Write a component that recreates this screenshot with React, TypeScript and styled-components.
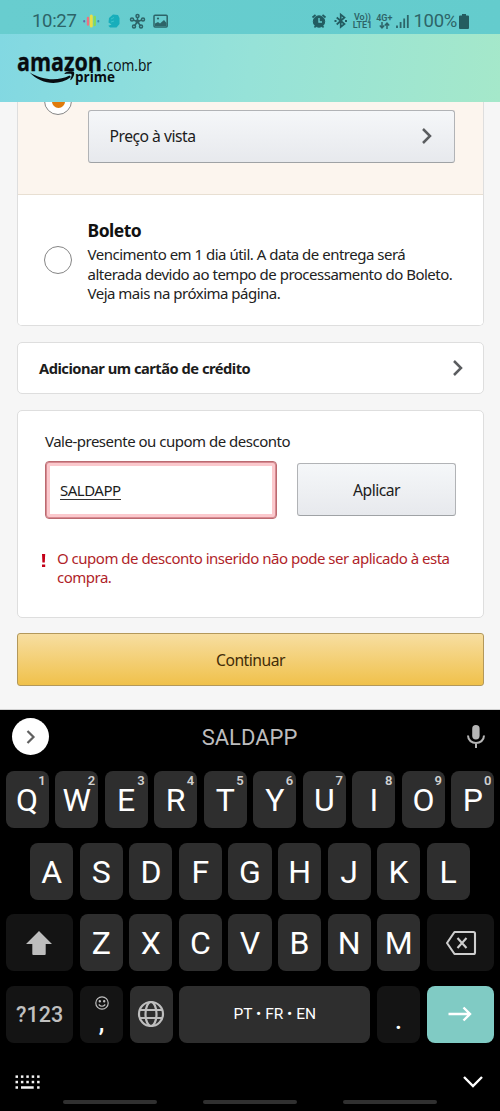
import React from "react";
import styled, { createGlobalStyle } from "styled-components";

const Global = createGlobalStyle`
  * { box-sizing: border-box; }
  body { margin: 0; background: #000; }
`;

const Screen = styled.div`
  width: 500px;
  height: 1111px;
  display: flex;
  flex-direction: column;
  overflow: hidden;
  font-family: "Noto Sans", "Open Sans", sans-serif;
  color: #1c1c1c;
`;

const StatusBar = styled.div`
  height: 34px;
  flex: none;
  display: flex;
  justify-content: space-between;
  padding: 8px 31px 0 32px;
  background: linear-gradient(90deg, #68cdcf, #64cccd);
  font-family: Roboto, sans-serif;
  color: #2d6468;
`;

const StatusGroup = styled.div<{ $gap: number }>`
  display: flex;
  align-items: center;
  gap: ${(p) => p.$gap}px;
  height: 26px;
`;

const StatusText = styled.span<{ $spacing: number }>`
  font-size: 18.5px;
  line-height: 26px;
  letter-spacing: ${(p) => p.$spacing}px;
`;

const Tiny = styled.span`
  display: flex;
  flex-direction: column;
  align-items: center;
  font-size: 9px;
  line-height: 8px;
  font-weight: 600;
`;

const Header = styled.header`
  height: 68px;
  flex: none;
  padding: 14px 0 0 12px;
  background: linear-gradient(97deg, #82d8e2 0%, #96e2d8 50%, #a5e8ca 100%);
`;

const Page = styled.main`
  height: 608px;
  flex: none;
  display: flex;
  flex-direction: column;
  padding: 0 16px 0 17px;
  background: #f6f6f6;
  border-bottom: 1px solid #d0d0d0;
  letter-spacing: -0.5px;
`;

const Card = styled.section<{ $height: number; $gap: number; $cut?: boolean }>`
  height: ${(p) => p.$height}px;
  margin-bottom: ${(p) => p.$gap}px;
  flex: none;
  overflow: hidden;
  background: #fff;
  border: 1px solid #dedede;
  border-top-width: ${(p) => (p.$cut ? 0 : 1)}px;
  border-radius: ${(p) => (p.$cut ? "0 0 5px 5px" : "5px")};
`;

const Option = styled.div<{ $selected?: boolean }>`
  display: flex;
  height: ${(p) => (p.$selected ? 93 : 130)}px;
  padding: ${(p) => (p.$selected ? "8px 28px 0 26px" : "25px 0 0 26px")};
  gap: 15.5px;
  background: ${(p) => (p.$selected ? "#fcf5ee" : "#fff")};
  border-bottom: ${(p) => (p.$selected ? "1px solid #e8dfd2" : "none")};
`;

const Radio = styled.span<{ $top: number }>`
  width: 28px;
  height: 28px;
  flex: none;
  display: flex;
  align-items: center;
  justify-content: center;
  margin-top: ${(p) => p.$top}px;
  border: 1px solid #858585;
  border-radius: 50%;
  background: #fff;
`;

const Dot = styled.span`
  width: 13px;
  height: 13px;
  border-radius: 50%;
  background: #e07b0c;
`;

const GreyButton = styled.button<{ $width: number; $split?: boolean }>`
  width: ${(p) => p.$width}px;
  height: 53px;
  flex: none;
  display: flex;
  align-items: center;
  justify-content: ${(p) => (p.$split ? "space-between" : "center")};
  padding: ${(p) => (p.$split ? "0 21px 1px 21px" : "0")};
  font: inherit;
  font-size: 15.7px;
  letter-spacing: inherit;
  color: #1c1c1c;
  background: linear-gradient(#f5f7f9, #e7e9ed);
  border: 1px solid #b1b3b6;
  border-bottom-color: #9fa2a5;
  border-radius: 3px;
`;

const Details = styled.div`
  white-space: nowrap;
`;

const OptionTitle = styled.div`
  font-size: 17.5px;
  line-height: 20px;
  font-weight: 700;
  color: #111;
  margin-bottom: 5px;
`;

const Copy = styled.p<{ $color?: string }>`
  margin: 0;
  font-size: 15px;
  line-height: 19.6px;
  white-space: nowrap;
  color: ${(p) => p.$color ?? "#222"};
`;

const LinkRow = styled.div`
  height: 100%;
  display: flex;
  align-items: center;
  justify-content: space-between;
  padding: 0 19px 0 21px;
  font-size: 14.7px;
  font-weight: 700;
`;

const Coupon = styled.div`
  padding: 21px 0 0 27px;
`;

const CouponForm = styled.div`
  display: flex;
  align-items: center;
  gap: 20px;
  margin-top: 9px;
`;

const CouponField = styled.div`
  width: 232px;
  height: 58px;
  display: flex;
  align-items: center;
  padding: 2px 14px 0;
  background: #fff;
  border: 1px solid #bb6a70;
  border-radius: 4px;
  box-shadow: inset 0 0 0 1px #d78b92, inset 0 0 0 4px #fbc9cd;
`;

const Entry = styled.span`
  font-size: 15px;
  line-height: 18px;
  border-bottom: 1px solid #333;
`;

const ErrorRow = styled.div`
  display: flex;
  gap: 10px;
  margin: 30px 0 0 -5px;
`;

const ContinueButton = styled.button`
  height: 53px;
  flex: none;
  padding: 0;
  font: inherit;
  font-size: 15.7px;
  letter-spacing: inherit;
  color: #422c08;
  background: linear-gradient(#f7dea1, #f0c14b);
  border: 1px solid #b3985a;
  border-radius: 3px;
`;

const Keyboard = styled.div`
  height: 401px;
  flex: none;
  display: flex;
  flex-direction: column;
  background: #000;
  color: #fff;
  font-family: Roboto, sans-serif;
`;

const Suggestions = styled.div`
  height: 61px;
  flex: none;
  display: grid;
  grid-template-columns: 37px 1fr 45px;
  align-items: start;
  padding: 8px 5px 0 12px;
`;

const Expand = styled.span`
  width: 37px;
  height: 37px;
  display: flex;
  align-items: center;
  justify-content: center;
  border-radius: 50%;
  background: #fff;
`;

const Suggestion = styled.span`
  text-align: center;
  font-size: 22px;
  line-height: 39px;
  color: #bdbdbd;
`;

const MicSlot = styled.span`
  display: flex;
  padding: 6px 0 0 16px;
`;

const Rows = styled.div`
  display: flex;
  flex-direction: column;
  gap: 14.5px;
  height: 272px;
  flex: none;
`;

const KeyRow = styled.div`
  display: flex;
  justify-content: center;
  gap: 6.5px;
`;

const Key = styled.div<{ $width?: number; $tone?: string }>`
  position: relative;
  width: ${(p) => p.$width ?? 43.05}px;
  height: 57px;
  flex: none;
  display: flex;
  flex-direction: column;
  align-items: center;
  justify-content: center;
  background: ${(p) => p.$tone ?? "#2e2e2e"};
  border-radius: 8px;
  font-size: 32px;
  line-height: 57px;
  padding-top: 2px;

  > svg {
    margin-top: -2px;
  }
`;

const Hint = styled.sup`
  position: absolute;
  top: 3px;
  right: 3px;
  font-size: 13px;
  line-height: 14px;
  font-weight: 600;
  color: #d0d0d0;
`;

const KeyLabel = styled.span<{ $size: number; $color?: string; $weight?: number }>`
  font-size: ${(p) => p.$size}px;
  line-height: 1;
  font-weight: ${(p) => p.$weight ?? 400};
  color: ${(p) => p.$color ?? "#fff"};
`;

const CommaKey = styled(Key)`
  justify-content: flex-start;
  padding-top: 12px;
  gap: 0;
`;

const PeriodKey = styled(Key)`
  justify-content: flex-end;
  padding-bottom: 10px;
`;

const Tools = styled.div`
  display: flex;
  justify-content: space-between;
  padding: 32px 16px 0 15px;
  height: 57px;
`;

const NavBars = styled.div`
  display: flex;
  justify-content: center;
  gap: 46px;
`;

const NavBar = styled.span`
  width: 94px;
  height: 4px;
  border-radius: 2px;
  background: #303030;
`;

const Chevron = () => (
  <svg width="12" height="18" viewBox="0 0 12 18" fill="none" stroke="#5b5d60" strokeWidth="2.5">
    <path d="M2 2L9 9L2 16" />
  </svg>
);

const Logo = () => (
  <svg width="160" height="44" viewBox="12 48 160 44" fontFamily="Open Sans" fill="#080c10">
    <text x="17" y="70.5" fontSize="25.5" fontWeight="700" textLength="85" lengthAdjust="spacingAndGlyphs" stroke="#080c10" strokeWidth=".3">amazon</text>
    <text x="103" y="70.5" fontSize="17" textLength="49" lengthAdjust="spacingAndGlyphs">.com.br</text>
    <text x="75" y="82" fontSize="15" fontWeight="700" textLength="40" lengthAdjust="spacingAndGlyphs">prime</text>
    <path d="M29.5 72.3C42 80.5 58 81.500 69.5 75.6L71 77C58.500 86.500 41 84.500 29.500 72.300Z" />
    <path d="M64.500 73.300C68 70.700 73 71 74 72.200C74.800 73.500 73.500 78 70.800 80.200L70.200 79.600C71.200 77.300 72.100 74.800 71.500 74.200C70.800 73.400 67 73.800 64.800 74Z" />
  </svg>
);

const NotificationIcons = () => (
  <svg width="90" height="20" viewBox="80 11 90 20">
    <g strokeLinecap="round" fill="none">
      <path d="M84.200 21V21.400" stroke="#6b63a4" strokeWidth="2" />
      <path d="M88 18V24.500" stroke="#ee7181" strokeWidth="2.400" />
      <path d="M91.300 16V26" stroke="#e9df45" strokeWidth="3" />
      <path d="M94.700 17V25" stroke="#8adb55" strokeWidth="2.400" />
      <path d="M98.300 21V21.400" stroke="#448bab" strokeWidth="2" />
    </g>
    <path d="M109 18L113 14.500L118 15L119.500 18V24L116.500 27.500H110L108.300 25.800L111.500 24.500L108.500 22.500Z" fill="#18aebb" />
    <path d="M111 19L114 17.500M111 22L114 21" stroke="#39c4ca" />
    <g stroke="#2d6468" strokeWidth="1.500" fill="none">
      <path d="M137.500 21.500V17M137.500 21.500L142 20M137.500 21.500L140.500 26M137.500 21.500L134.500 26M137.500 21.500L133 20" />
      <circle cx="137.500" cy="16" r="1.500" /><circle cx="143" cy="19.500" r="1.500" /><circle cx="141" cy="26.500" r="1.500" /><circle cx="134" cy="26.500" r="1.500" /><circle cx="132" cy="19.500" r="1.500" />
      <circle cx="137.500" cy="21.500" r="1.300" fill="#2d6468" />
      <rect x="154" y="15.300" width="13.200" height="11.700" rx="1" strokeWidth="1.500" />
    </g>
    <path d="M155 26V23.500L158 22L160 23.500L164 20L166.500 23V26Z" fill="#2d6468" />
    <circle cx="158" cy="18.500" r="1.100" fill="#2d6468" />
  </svg>
);

const AlarmBluetooth = () => (
  <svg width="38" height="20" viewBox="310 11 38 20" fill="none" stroke="#225c61">
    <circle cx="318" cy="21.500" r="5.700" fill="#225c61" />
    <path d="M311.500 17.500L314.500 14.800M324.500 17.500L321.500 14.800M313.500 27.500L315 25.500M322.500 27.500L321 25.500" strokeWidth="1.700" />
    <path d="M318 18V22H321" stroke="#68cdcf" strokeWidth="1.400" />
    <path d="M335.700 17.500L343.500 24L339.700 27V14.500L343.500 17.500L335.700 24.500" strokeWidth="1.700" />
    <path d="M333.500 21H335.500M344 21H346" strokeWidth="2" />
  </svg>
);

const Arrows = () => (
  <svg width="11" height="7" viewBox="0 0 11 7" stroke="#2d6468" strokeWidth="1.500" fill="none">
    <path d="M3 0V5.500M.8 3.500L3 5.800L5.200 3.500M8 7V1.500M5.800 3.500L8 1.200L10.200 3.500" />
  </svg>
);

const Signal = () => (
  <svg width="13" height="14" viewBox="0 0 13 14" stroke="#2d6468" strokeWidth="1.800">
    <path d="M1 11.500V14M4.600 8V14M8.200 4.500V14M11.800 1V14" />
  </svg>
);

const BatteryIcon = styled.svg`
  margin-left: -2px;
`;

const Battery = () => (
  <BatteryIcon width="10" height="15" viewBox="0 0 10 15" fill="#245c60">
    <path d="M3 0H7V1.500H9Q10 1.500 10 2.500V14Q10 15 9 15H1Q0 15 0 14V2.500Q0 1.500 1 1.500H3Z" />
  </BatteryIcon>
);

const Mic = () => (
  <svg width="20" height="26" viewBox="0 0 20 26">
    <rect x="6.200" y="1" width="7.400" height="14.500" rx="3.700" fill="#b5b5b5" />
    <path d="M2 11.500C2 21.500 18 21.500 18 11.500M10 19V24" fill="none" stroke="#b5b5b5" strokeWidth="2" />
  </svg>
);

const Shift = () => (
  <svg width="26" height="24" viewBox="0 0 26 24" fill="#bdbdbd">
    <path d="M13 0L26 13H19.700V23Q19.700 24 18.700 24H7.300Q6.300 24 6.300 23V13H0Z" />
  </svg>
);

const Backspace = () => (
  <svg width="32" height="26" viewBox="0 0 32 26" fill="none" stroke="#cecece" strokeWidth="2.100" strokeLinejoin="round">
    <path d="M9.500 2H28.500Q30 2 30 3.500V22.500Q30 24 28.500 24H9.500L2 13Z" />
    <path d="M12.500 8L21.500 18M21.500 8L12.500 18" />
  </svg>
);

const Smiley = () => (
  <svg width="14" height="14" viewBox="0 0 14 14" fill="none" stroke="#bebebe" strokeWidth="1.200">
    <circle cx="7" cy="7" r="6.200" />
    <path d="M3.700 8.500Q7 12 10.300 8.500" />
    <circle cx="4.800" cy="5.300" r=".6" fill="#bebebe" /><circle cx="9.200" cy="5.300" r=".6" fill="#bebebe" />
  </svg>
);

const Globe = () => (
  <svg width="28" height="28" viewBox="0 0 28 28" fill="none" stroke="#bebebe" strokeWidth="2.200">
    <circle cx="14" cy="14" r="12" />
    <ellipse cx="14" cy="14" rx="5.500" ry="12" />
    <path d="M3 10H25M3 18H25" />
  </svg>
);

const Enter = () => (
  <svg width="24" height="16" viewBox="0 0 24 16" fill="none" stroke="#fff" strokeWidth="2.400">
    <path d="M.5 8H22M15.500 1.500L22 8L15.500 14.500" />
  </svg>
);

const KeyboardDots = () => (
  <svg width="26" height="15" viewBox="0 0 26 15" fill="#f4f4f4">
    {[0, 5.4].map((y) => [0, 5.4, 10.8, 16.2, 21.6].map((x) => <rect key={`${x}-${y}`} x={x + 0.5} y={y + 0.4} width="2.500" height="2.500" />))}
    <path d="M.5 11.200H3V13.700H.5ZM6 11.200H18.700V13.700H6ZM22.100 11.200H24.600V13.700H22.100Z" />
  </svg>
);

const ErrorMark = styled.svg`
  flex: none;
  margin-top: 5px;
`;

const DARK = "#141414";

export default function App() {
  return (
    <Screen>
      <Global />
      <StatusBar>
        <StatusGroup $gap={3}>
          <StatusText $spacing={-0.3}>10:27</StatusText>
          <NotificationIcons />
        </StatusGroup>
        <StatusGroup $gap={4}>
          <AlarmBluetooth />
          <Tiny><span>Vo))</span><span>LTE1</span></Tiny>
          <Tiny><span>4G+</span><Arrows /></Tiny>
          <Signal />
          <StatusText $spacing={-0.3}>100%</StatusText>
          <Battery />
        </StatusGroup>
      </StatusBar>
      <Header><Logo /></Header>
      <Page>
        <Card $cut $height={224} $gap={16}>
          <Option $selected>
            <Radio $top={-23}><Dot /></Radio>
            <GreyButton $width={367} $split>Preço à vista<Chevron /></GreyButton>
          </Option>
          <Option>
            <Radio $top={26}/>
            <Details>
              <OptionTitle>Boleto</OptionTitle>
              <Copy>
                Vencimento em 1 dia útil. A data de entrega será<br />
                alterada devido ao tempo de processamento do Boleto.<br />
                Veja mais na próxima página.
              </Copy>
            </Details>
          </Option>
        </Card>
        <Card $height={52} $gap={16}>
          <LinkRow>Adicionar um cartão de crédito<Chevron /></LinkRow>
        </Card>
        <Card $height={208} $gap={15}>
          <Coupon>
            <Copy>Vale-presente ou cupom de desconto</Copy>
            <CouponForm>
              <CouponField><Entry>SALDAPP</Entry></CouponField>
              <GreyButton $width={159}>Aplicar</GreyButton>
            </CouponForm>
            <ErrorRow>
              <ErrorMark width="7" height="14" viewBox="0 0 7 14" fill="#c40018">
                <path d="M2 0H5.200L4.800 8.500H2.400ZM2 10.500H5.200V13H2Z" />
              </ErrorMark>
              <Copy $color="#b01f2a">
                O cupom de desconto inserido não pode ser aplicado à esta<br />compra.
              </Copy>
            </ErrorRow>
          </Coupon>
        </Card>
        <ContinueButton>Continuar</ContinueButton>
      </Page>
      <Keyboard>
        <Suggestions>
          <Expand>
            <svg width="12" height="16" viewBox="0 0 12 16" fill="none" stroke="#606060" strokeWidth="2.200"><path d="M2.500 2L8.500 8L2.500 14" /></svg>
          </Expand>
          <Suggestion>SALDAPP</Suggestion>
          <MicSlot><Mic /></MicSlot>
        </Suggestions>
        <Rows>
          <KeyRow>
            {"QWERTYUIOP".split("").map((c, i) => <Key key={c}>{c}<Hint>{(i + 1) % 10}</Hint></Key>)}
          </KeyRow>
          <KeyRow>
            {"ASDFGHJKL".split("").map((c) => <Key key={c}>{c}</Key>)}
          </KeyRow>
          <KeyRow>
            <Key $width={67.8} $tone={DARK}><Shift /></Key>
            {"ZXCVBNM".split("").map((c) => <Key key={c}>{c}</Key>)}
            <Key $width={67.8} $tone={DARK}><Backspace /></Key>
          </KeyRow>
          <KeyRow>
            <Key $width={67.8} $tone={DARK}><KeyLabel $size={21.5} $color="#c0c0c0" $weight={500}>?123</KeyLabel></Key>
            <CommaKey $tone={DARK}><Smiley /><KeyLabel $size={25} $weight={500}>,</KeyLabel></CommaKey>
            <Key><Globe /></Key>
            <Key $width={191.4}><KeyLabel $size={15.5}>PT • FR • EN</KeyLabel></Key>
            <PeriodKey $tone={DARK}><KeyLabel $size={25} $weight={500}>.</KeyLabel></PeriodKey>
            <Key $width={67.8} $tone="#80cbc4"><Enter /></Key>
          </KeyRow>
        </Rows>
        <Tools>
          <KeyboardDots />
          <svg width="22" height="14" viewBox="0 0 22 14" fill="none" stroke="#fff" strokeWidth="2.400"><path d="M2 2L11 11L20 2" /></svg>
        </Tools>
        <NavBars><NavBar /><NavBar /><NavBar /></NavBars>
      </Keyboard>
    </Screen>
  );
}
